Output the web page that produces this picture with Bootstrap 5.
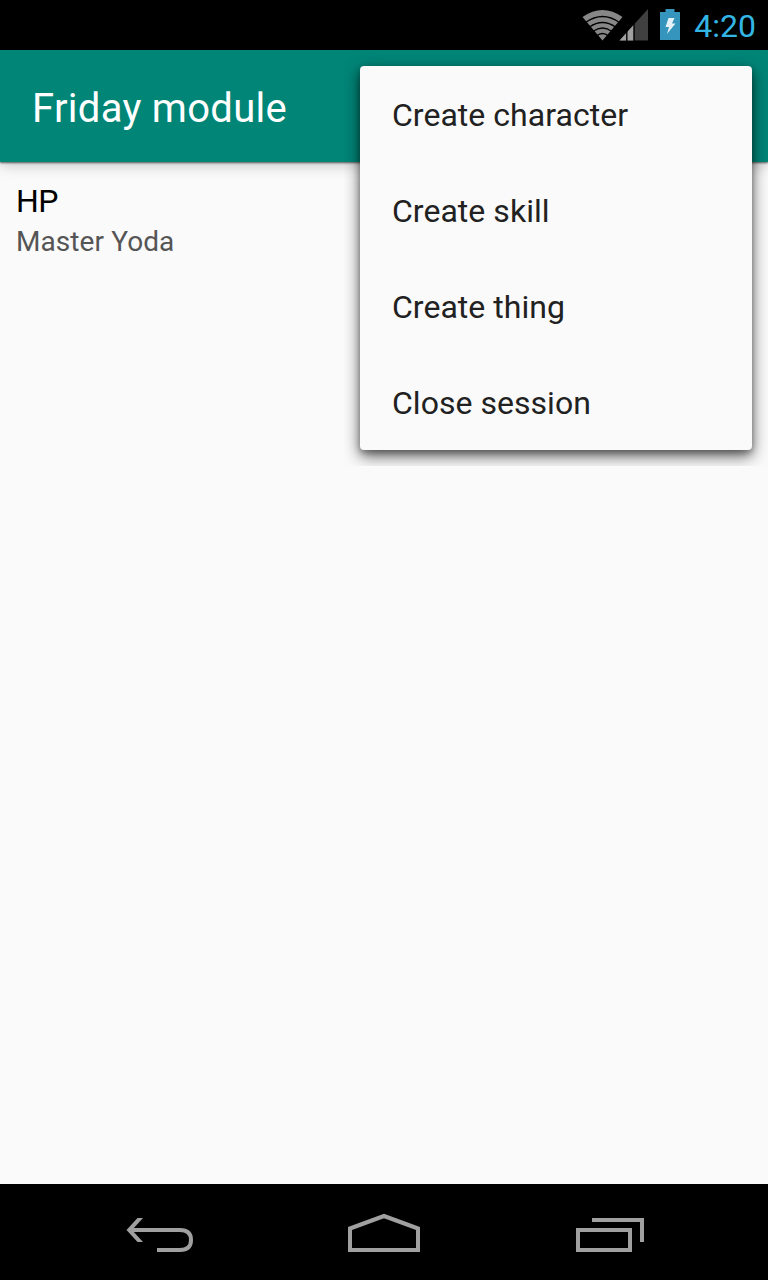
<!DOCTYPE html>
<html lang="en">
<head>
<meta charset="utf-8">
<meta name="viewport" content="width=device-width, initial-scale=1">
<title>Friday module</title>
<link href="https://cdn.jsdelivr.net/npm/bootstrap@5.3.0/dist/css/bootstrap.min.css" rel="stylesheet">
<style>
body{font-family:Roboto,"Noto Sans",sans-serif;background:#fafafa;line-height:1.2}
.status-bar{height:50px;background:#000;color:#33b5e5;padding-right:12px}
.status-bar .clock{font-size:32px;line-height:52px;margin-left:12px}
.app-bar{height:112px;background:#008577;padding:0 32px;box-shadow:0 1px 2px rgba(0,0,0,.6),0 4px 13px rgba(0,0,0,.19);z-index:1}
.app-title{font-size:40px;font-weight:400;color:#fff;line-height:48px;letter-spacing:.3px;padding-top:6px}
.item-title{font-size:32px;color:#000;line-height:40px;letter-spacing:-.6px;padding-top:3px;margin-bottom:1px}
.item-sub{font-size:28px;color:#555;line-height:40px;letter-spacing:.08px}
.overflow-menu{top:66px;right:16px;width:392px;height:384px;background:#fafafa;border-radius:4px;z-index:5}
.overflow-menu::before{content:"";position:absolute;inset:0;border-radius:4px;box-shadow:0 6px 16px rgba(0,0,0,.62),0 3px 6px rgba(0,0,0,.28);clip-path:inset(-16px);z-index:-1}
.overflow-menu a{height:96px;padding:2px 32px 0;font-size:32px;color:#212121;letter-spacing:.03px}
.nav-bar{height:96px;background:#000}
</style>
</head>
<body class="vh-100 d-flex flex-column overflow-hidden position-relative">
<div class="status-bar d-flex justify-content-end flex-shrink-0">
  <svg width="104" height="50" viewBox="578 0 104 50" aria-hidden="true">
    <path d="M602.5 40.5 582.5 17Q602.5 3 622.5 17Z" fill="#878787"/>
    <g fill="none" stroke="#000" stroke-width="1.3">
      <path d="M585.500 22.500Q602.5 10.500 619.500 22.500M589.500 27Q602.5 18 615.500 27M593 31.500Q602.500 24.500 612 31.500M596.500 36Q602.500 31 608.500 36"/>
    </g>
    <path d="M619.500 40.500 648 9V40.500Z" fill="#404040"/>
    <path d="M619.500 40.500 634 24.500V40.500Z" fill="#a0a0a0"/>
    <path d="M626.800 31V41M634 23V41" stroke="#000" stroke-width="1.400"/>
    <path d="M665.500 9H674.500V12H680V40H660V12H665.500Z" fill="#3595bc"/>
    <path d="M668.500 18H674.500L672 23.500H675.500L667 34L669 27H665.500Z" fill="#e4f1f6"/>
  </svg>
  <span class="clock">4:20</span>
</div>
<nav class="app-bar d-flex align-items-center flex-shrink-0 position-relative">
  <h1 class="app-title mb-0">Friday module</h1>
</nav>
<main class="flex-grow-1 px-3 pt-3">
  <div class="item-title">HP</div>
  <div class="item-sub">Master Yoda</div>
</main>
<div class="overflow-menu position-absolute d-flex flex-column">
  <a class="d-flex align-items-center text-decoration-none"><span>Create character</span></a>
  <a class="d-flex align-items-center text-decoration-none"><span>Create skill</span></a>
  <a class="d-flex align-items-center text-decoration-none"><span>Create thing</span></a>
  <a class="d-flex align-items-center text-decoration-none"><span>Close session</span></a>
</div>
<footer class="nav-bar flex-shrink-0">
  <svg class="d-block" width="768" height="96" viewBox="0 1184 768 96" fill="none" stroke="#a0a0a0" stroke-width="4" aria-hidden="true">
    <path d="M130 1230H180Q191 1230 191 1240Q191 1250 180 1250H157"/>
    <path d="M137.500 1218H143L132 1230L143 1242H137.500L126.500 1230Z" fill="#a0a0a0" stroke="none"/>
    <path d="M350 1228.500 384 1216 418 1228.500V1250H350Z"/>
    <path d="M578 1230H630V1250H578ZM592 1220H642V1242"/>
  </svg>
</footer>
<script src="https://cdn.jsdelivr.net/npm/bootstrap@5.3.0/dist/js/bootstrap.bundle.min.js"></script>
</body>
</html>
